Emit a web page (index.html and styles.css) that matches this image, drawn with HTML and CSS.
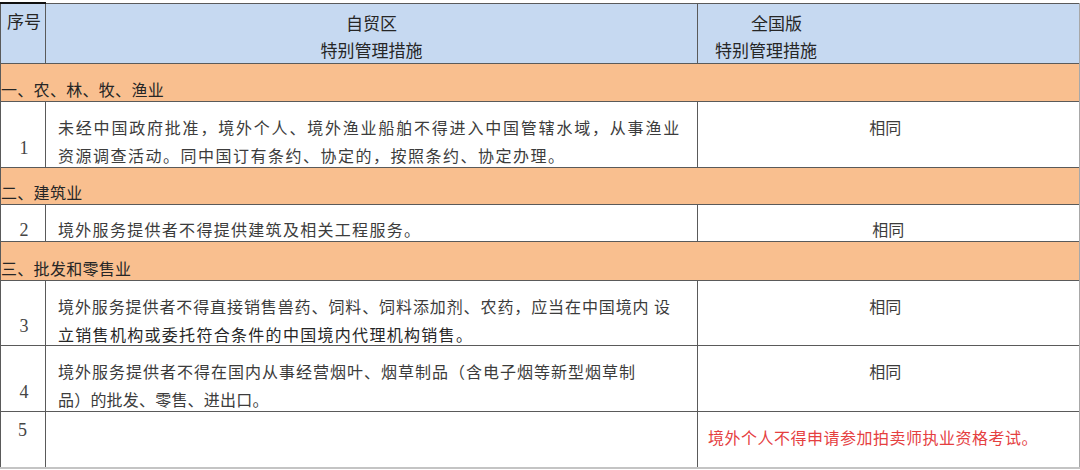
FILE: index.html
```html
<!DOCTYPE html>
<html lang="zh-CN">
<head>
<meta charset="utf-8">
<title>特别管理措施对比</title>
<link rel="stylesheet" href="styles.css">
</head>
<body>
<div class="wrap">
<table class="grid">
  <colgroup>
    <col class="c-no">
    <col class="c-ftz">
    <col class="c-nat">
  </colgroup>
  <tr class="r-head">
    <th class="h-no">序号</th>
    <th class="h-ftz">自贸区<br>特别管理措施</th>
    <th class="h-nat"><span class="h-l1">全国版</span><br><span class="h-l2">特别管理措施</span></th>
  </tr>
  <tr class="r-sec r-s1">
    <td colspan="3" class="sec">一、农、林、牧、渔业</td>
  </tr>
  <tr class="r-1">
    <td class="no">1</td>
    <td class="txt"><div class="lines"><span class="ls-a">未经中国政府批准，境外个人、境外渔业船舶不得进入中国管辖水域，从事渔业</span><br><span class="ls-b">资源调查活动。同中国订有条约、协定的，按照条约、协定办理。</span></div></td>
    <td class="same"><div class="lines">相同</div></td>
  </tr>
  <tr class="r-sec r-s2">
    <td colspan="3" class="sec">二、建筑业</td>
  </tr>
  <tr class="r-2">
    <td class="no no-single">2</td>
    <td class="txt txt-single"><span class="ls-c">境外服务提供者不得提供建筑及相关工程服务。</span></td>
    <td class="same same-2">相同</td>
  </tr>
  <tr class="r-sec r-s3">
    <td colspan="3" class="sec">三、批发和零售业</td>
  </tr>
  <tr class="r-3">
    <td class="no">3</td>
    <td class="txt"><div class="lines"><span class="ls-d">境外服务提供者不得直接销售兽药、饲料、饲料添加剂、农药，应当在中国境内 设</span><br><span class="ls-e dark">立销售机构或委托符合条件的中国境内代理机构销售。</span></div></td>
    <td class="same"><div class="lines">相同</div></td>
  </tr>
  <tr class="r-4">
    <td class="no">4</td>
    <td class="txt light"><div class="lines"><span class="ls-f">境外服务提供者不得在国内从事经营烟叶、烟草制品（含电子烟等新型烟草制</span><br><span class="ls-g">品）的批发、零售、进出口。</span></div></td>
    <td class="same"><div class="lines">相同</div></td>
  </tr>
  <tr class="r-5">
    <td class="no no-top">5</td>
    <td class="txt"></td>
    <td class="red"><div class="lines">境外个人不得申请参加拍卖师执业资格考试。</div></td>
  </tr>
</table>
</div>
</body>
</html>
```

FILE: styles.css
```css
html, body {
  margin: 0;
  padding: 0;
  background: #ffffff;
}

.wrap {
  padding-top: 2px;
  width: 1080px;
}

.grid {
  border-collapse: collapse;
  table-layout: fixed;
  width: 1079px;
  font-family: "Noto Sans CJK SC", "Noto Sans", sans-serif;
  color: #3a3a3a;
  border-left: 1px solid #8a8a8a;
  border-right: 2px solid #a8a8a8;
  border-bottom: 2px solid #c4c4c4;
  border-top: 1px solid #d4d4d4;
}

.c-no { width: 45px; }
.c-ftz { width: 652px; }
.c-nat { width: 382px; }

.grid th,
.grid td {
  border: 1px solid #5a5a5a;
  padding: 0;
  vertical-align: top;
}

/* header */
.r-head { height: 60px; }
.r-head th {
  background: #c6d9f1;
  font-weight: normal;
  font-size: 17px;
  line-height: 27px;
  color: #262626;
  padding-top: 5px;
}
.grid .h-no {
  border-top: 2px solid #111;
  text-align: left;
  padding-left: 6px;
  padding-top: 3px;
}
.h-ftz {
  text-align: center;
}
.h-nat {
  text-align: left;
}
.h-l1 { margin-left: 53px; }
.h-l2 { margin-left: 17px; }

/* section rows */
.r-s1 { height: 38px; }
.r-s2 { height: 37px; }
.r-s3 { height: 39px; }
.grid .sec {
  background: #f9bf8f;
  font-size: 16px;
  line-height: 20px;
  color: #262626;
  vertical-align: bottom;
  padding: 0 0 2px 0;
  letter-spacing: 0.3px;
}

/* data rows */
.r-1 { height: 66px; }
.r-2 { height: 37px; }
.r-3 { height: 65px; }
.r-4 { height: 66px; }
.r-5 { height: 57px; }

.lines {
  line-height: 28px;
  margin-bottom: -12px;
}

.grid .no {
  font-family: "Liberation Serif", "Times New Roman", serif;
  font-size: 18px;
  line-height: 20px;
  text-align: center;
  color: #454545;
  vertical-align: bottom;
  padding-bottom: 9px;
  padding-left: 2px;
}
.grid .no-single {
  padding-bottom: 1px;
}
.grid .no-top {
  vertical-align: top;
  padding-top: 8px;
  padding-bottom: 0;
  text-align: left;
  padding-left: 17px;
}

.grid .txt {
  font-size: 16px;
  padding: 11px 0 0 12px;
  white-space: nowrap;
  color: #3c3c3c;
}
.grid .txt-single {
  vertical-align: bottom;
  padding: 0 0 1px 12px;
  line-height: 22px;
}
.light { color: #555555; }
.grid .txt .dark { color: #262626; }

.ls-a { letter-spacing: 1.8px; }
.ls-b { letter-spacing: 1.5px; }
.ls-c { letter-spacing: 1.3px; }
.ls-d { letter-spacing: 0.9px; }
.ls-e { letter-spacing: 1.3px; }
.ls-f { letter-spacing: 1.0px; }
.ls-g { letter-spacing: 0.2px; }

.grid .same {
  font-size: 16px;
  text-align: center;
  padding: 11px 6px 0 0;
  color: #3c3c3c;
}
.grid .same-2 {
  vertical-align: bottom;
  line-height: 22px;
  padding: 0 0 1px 0;
}

.grid .red {
  font-size: 16px;
  color: #e5403f;
  padding: 11px 0 0 10px;
  letter-spacing: 0.5px;
  white-space: nowrap;
}
```
